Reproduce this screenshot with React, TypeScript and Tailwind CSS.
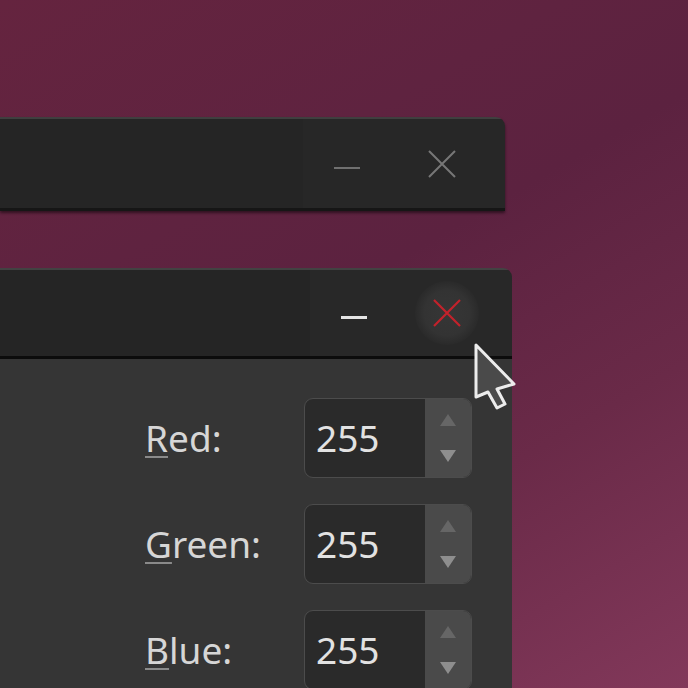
import React from "react";

const font = { fontFamily: "'Noto Sans', 'Open Sans', 'Liberation Sans', sans-serif" };

function Spin({ value }: { value: string }) {
  return (
    <div className="flex h-[80px] w-[168px] overflow-hidden rounded-[9px] border border-[#4c4c4c] bg-[#2a2a2a]">
      <div className="flex flex-1 items-center pl-[11px] text-[37px] text-[#e2e2e2]">{value}</div>
      <div className="flex w-[46px] flex-col items-center justify-between bg-[#4a4a4a] py-[14px]">
        <svg width="18" height="14" viewBox="0 0 18 14">
          <polygon points="9,1 17,13 1,13" fill="#666666" />
        </svg>
        <svg width="18" height="14" viewBox="0 0 18 14">
          <polygon points="1,1 17,1 9,13" fill="#8e8e8e" />
        </svg>
      </div>
    </div>
  );
}

function Row({ first, rest, value }: { first: string; rest: string; value: string }) {
  return (
    <div className="flex items-center">
      <div className="w-[159px] text-[37px] text-[#d6d6d6]">
        <span className="underline decoration-[#8a8a8a] decoration-[2px] underline-offset-[4px]">{first}</span>
        {rest}
      </div>
      <Spin value={value} />
    </div>
  );
}

export default function App() {
  return (
    <div
      className="relative h-[688px] w-[688px] overflow-hidden bg-[linear-gradient(150deg,#65243f_0%,#5f2340_30%,#5c2240_45%,#6a2a48_70%,#82385a_100%)]"
      style={font}
    >
      {/* Window 1 */}
      <div className="absolute left-0 top-[117px] flex h-[94px] w-[505px] flex-col overflow-hidden rounded-tr-[9px] shadow-[0_2px_3px_rgba(0,0,0,0.5)]">
        <div className="h-[2px] bg-[#3f3f3f]" />
        <div className="flex flex-1">
          <div className="flex-1 bg-[#252525]" />
          <div className="flex w-[202px] items-center bg-[#272727]">
            <div className="ml-[31px] mt-[8px] h-[2px] w-[26px] bg-[#707070]" />
            <svg className="ml-[68px]" width="28" height="28" viewBox="0 0 28 28">
              <path d="M1 1 L27 27 M27 1 L1 27" stroke="#777777" strokeWidth="2" />
            </svg>
          </div>
        </div>
        <div className="h-[3px] bg-[#161616]" />
      </div>

      {/* Window 2 */}
      <div className="absolute left-0 top-[268px] flex h-[440px] w-[512px] flex-col overflow-hidden rounded-tr-[9px]">
        <div className="h-[2px] bg-[#424242]" />
        <div className="flex h-[86px]">
          <div className="flex-1 bg-[#252525]" />
          <div className="flex w-[202px] items-center bg-[#282828]">
            <div className="ml-[31px] mt-[8px] h-[3px] w-[26px] bg-[#e4e4e4]" />
            <div className="ml-[48px] flex h-[64px] w-[64px] items-center justify-center rounded-full bg-[radial-gradient(circle,#363636_0%,#333333_50%,#282828_75%)]">
              <svg width="28" height="28" viewBox="0 0 28 28">
                <path d="M1 1 L27 27 M27 1 L1 27" stroke="#c3222b" strokeWidth="2.2" />
              </svg>
            </div>
          </div>
        </div>
        <div className="h-[3px] bg-[#0c0c0c]" />
        <div className="flex flex-1 flex-col gap-[26px] bg-[#353535] pl-[145px] pt-[39px]">
          <Row first="R" rest="ed:" value="255" />
          <Row first="G" rest="reen:" value="255" />
          <Row first="B" rest="lue:" value="255" />
        </div>
      </div>

      {/* Cursor */}
      <svg className="absolute left-[472px] top-[342px]" width="48" height="72" viewBox="0 0 48 72">
        <path
          d="M4 3 L4 55 L16 50 L25 66 L33 62 L25 47 L42 42 Z"
          fill="#4a4a4a"
          stroke="#ececec"
          strokeWidth="3"
          strokeLinejoin="round"
        />
      </svg>
    </div>
  );
}
